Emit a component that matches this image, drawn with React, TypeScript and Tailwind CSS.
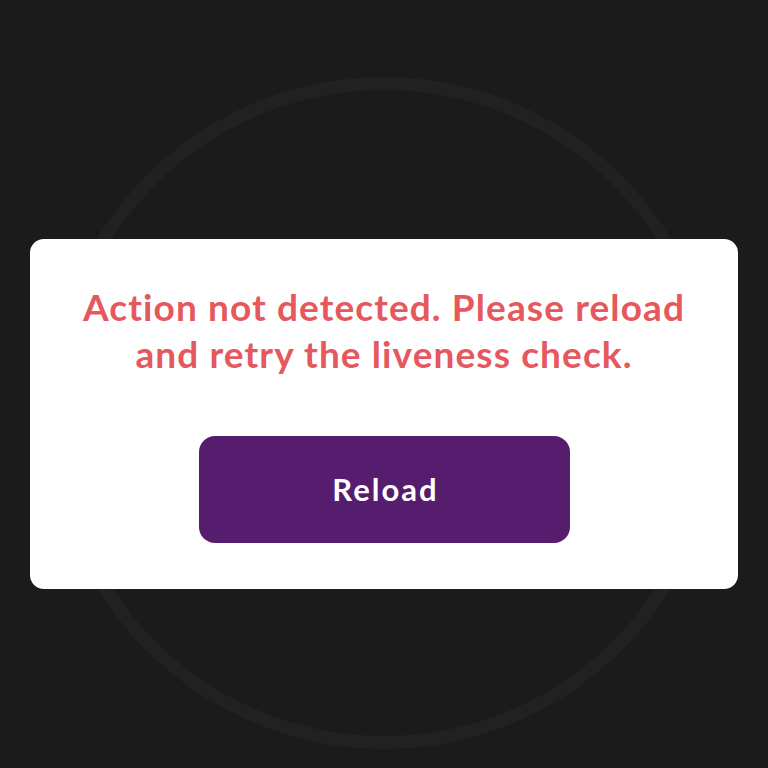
export default function App() {
  return (
    <div
      className="relative h-[768px] w-[768px] overflow-hidden bg-[#1b1b1b]"
      style={{ fontFamily: 'Lato, "Open Sans", sans-serif' }}
    >
      {/* faint ring behind the dialog */}
      <div className="absolute left-[48px] top-[77px] h-[672px] w-[672px] rounded-full border-[13px] border-[#212121]" />

      <div className="relative flex flex-col px-[30px] pt-[239px]">
        <div className="flex h-[350px] flex-col items-center rounded-[14px] bg-white px-6 pt-[44px]">
          <p className="text-center text-[37px] font-bold leading-[47px] tracking-[1.1px] text-[#e5585e]">
            Action not detected. Please reload
            <br />
            and retry the liveness check.
          </p>
          <button className="mt-[59px] flex h-[107px] w-[371px] items-center justify-center rounded-[16px] bg-[#561c6e] pl-[3px] text-[31px] font-bold tracking-[2px] text-white">
            Reload
          </button>
        </div>
      </div>
    </div>
  );
}
